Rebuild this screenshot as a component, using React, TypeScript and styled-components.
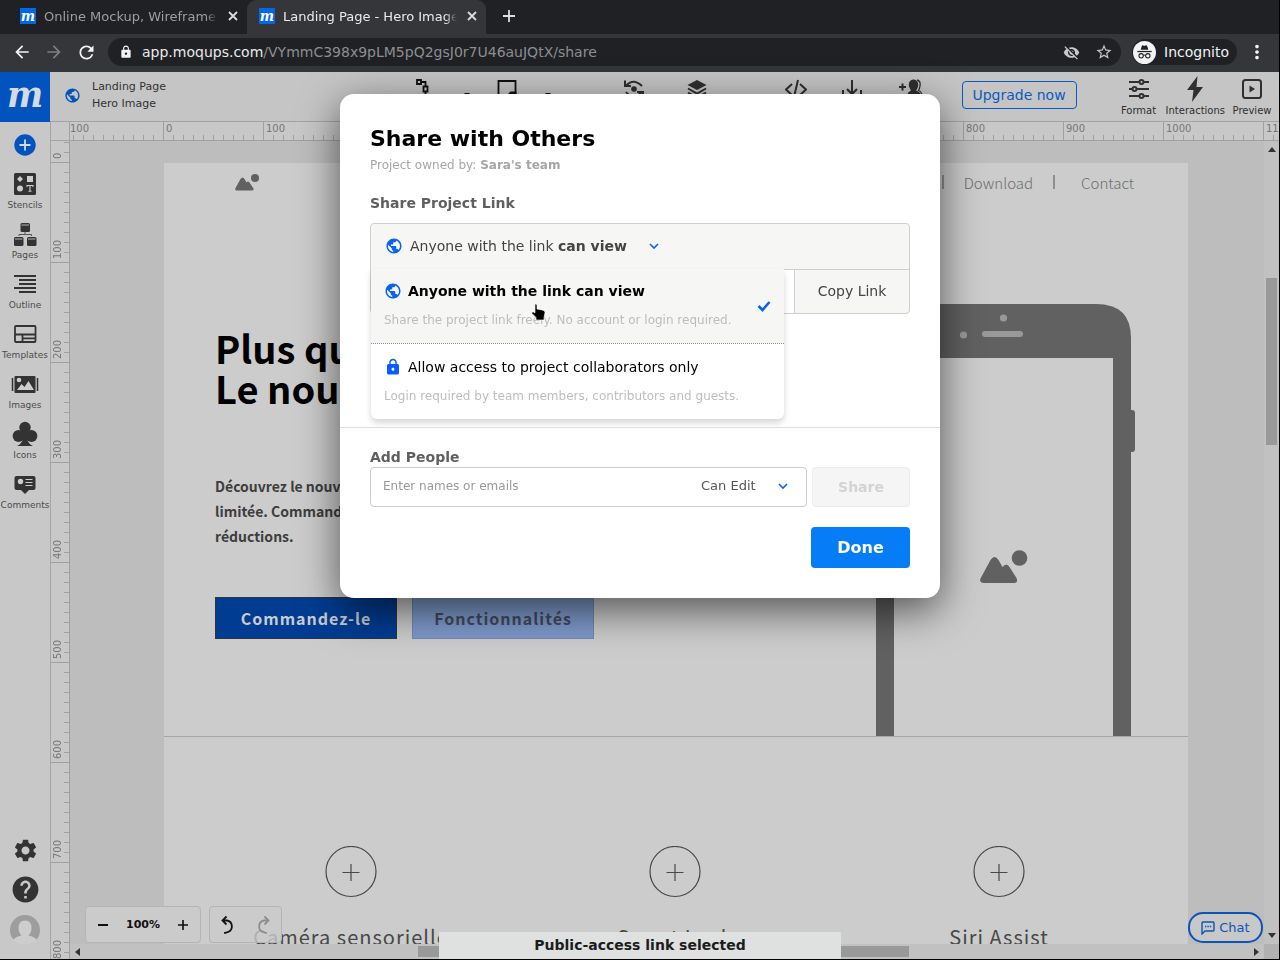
import React from "react";
import styled, { createGlobalStyle, css } from "styled-components";
import {
  MdPublic,
  MdSettings,
  MdHelp,
  MdLock,
  MdVisibilityOff,
  MdStarBorder,
  MdArrowBack,
  MdArrowForward,
  MdRefresh,
  MdMoreVert,
} from "react-icons/md";

const ui = `"DejaVu Sans", Verdana, sans-serif`;
const design = `"Noto Sans CJK SC", "Noto Sans", sans-serif`;
const brand = `"DejaVu Serif Condensed", "DejaVu Serif", serif`;

const GlobalStyle = createGlobalStyle`
  *, *::before, *::after { box-sizing: border-box; }
  body { margin: 0; font-family: ${ui}; background: #000; }
  button, input, select { font: inherit; color: inherit; margin: 0; }
  button { cursor: pointer; padding: 0; border: 0; background: none; }
  h1, h2, h3, p { margin: 0; }
  svg { display: block; flex: none; }
`;

const Window = styled.div`
  height: 100vh;
  display: flex;
  flex-direction: column;
  overflow: hidden;
  border-right: 1px solid #000;
  border-bottom: 1px solid #000;
  background: #c8c8c8;
`;

/* ---------- browser chrome ---------- */

const TabStrip = styled.div`
  display: flex;
  height: 34px;
  padding-left: 8px;
  background: #202124;
`;

const Tab = styled.div<{ $active?: boolean }>`
  display: flex;
  align-items: center;
  width: 239px;
  padding: 0 7px 2px 12px;
  gap: 8px;
  font-size: 13px;
  border-radius: 9px 9px 0 0;
  color: ${(p) => (p.$active ? "#e8eaed" : "#9b9ea2")};
  background: ${(p) => (p.$active ? "#35363a" : "transparent")};
`;

const Favicon = styled.span`
  display: grid;
  place-items: center;
  flex: none;
  width: 16px;
  height: 16px;
  background: #0666e8;
  color: #fff;
  font: italic bold 15px/14px ${brand};
`;

const TabTitle = styled.span`
  flex: 1;
  min-width: 0;
  overflow: hidden;
  white-space: nowrap;
  mask-image: linear-gradient(90deg, #000 93%, transparent);
`;

const TabButton = styled.button`
  display: grid;
  place-items: center;
  width: 14px;
  height: 32px;
  color: #dadce0;
`;

const NewTab = styled(TabButton)`
  margin: 0 16px;
`;

const AddressBar = styled.div`
  display: flex;
  align-items: center;
  height: 38px;
  padding: 0 11px 2px 12px;
  background: #35363a;
  color: #f1f3f4;
`;

const NavButtons = styled.div`
  display: flex;
  gap: 12px;
  width: 96px;
`;

const NavButton = styled.button<{ $dim?: boolean }>`
  color: ${(p) => (p.$dim ? "#7d7e81" : "#f1f3f4")};
`;

const Omnibox = styled.div`
  display: flex;
  flex: 1;
  align-items: center;
  height: 28px;
  padding: 0 8px 0 11px;
  gap: 9px;
  border-radius: 14px;
  background: #202124;
  font-size: 14px;
`;

const Url = styled.span`
  flex: 1;
  color: #8c8e91;
  strong { font-weight: 400; color: #e8eaed; }
`;

const OmniButton = styled.button`
  margin-left: 6px;
  color: #c6c8cb;
`;

const Incognito = styled.div`
  display: flex;
  align-items: center;
  gap: 8px;
  height: 26px;
  margin: 0 9px 0 11px;
  padding: 0 8px 0 1px;
  border-radius: 13px;
  background: #202124;
  font-size: 14px;
`;

/* ---------- application frame ---------- */

const AppHeader = styled.header`
  display: flex;
  align-items: center;
  flex: none;
  height: 50px;
  background: #c5c5c6;
  border-bottom: 1px solid #a3a3a3;
`;

const Logo = styled.a`
  display: grid;
  place-items: center;
  align-self: flex-start;
  flex: none;
  width: 50px;
  height: 50px;
  background: #0253bd;
  color: #d5dbe4;
  font: italic bold 38px/42px ${brand};
  text-decoration: none;
  padding-bottom: 6px;
`;

const Project = styled.div`
  display: flex;
  align-items: center;
  gap: 11px;
  width: 150px;
  padding: 0 0 3px 14px;
  color: #333;
  font-size: 11px;
  line-height: 17px;
  white-space: nowrap;
  > svg { color: #0253bd; }
`;

const Tools = styled.div`
  display: flex;
  flex: 1;
  justify-content: center;
  align-items: flex-start;
  align-self: stretch;
  padding: 6px 0 0 212px;
  color: #2f2f2f;
`;

const Tool = styled.button<{ $gap: number }>`
  margin-right: ${(p) => p.$gap}px;
`;

const Upgrade = styled.button`
  height: 28px;
  width: 115px;
  border: 1px solid #0a5cc0;
  border-radius: 4px;
  color: #0a5cc0;
  font-size: 14px;
  margin: 0 40px 3px 37px;
`;

const PanelTools = styled.div`
  display: flex;
  gap: 5px;
  padding-right: 5px;
`;

const PanelTool = styled.button`
  display: flex;
  flex-direction: column;
  align-items: center;
  min-width: 44px;
  gap: 2px;
  font-size: 10px;
  line-height: 14px;
  color: #303030;
`;

const Body = styled.div`
  display: flex;
  flex: 1;
  min-height: 0;
`;

const Sidebar = styled.nav`
  display: flex;
  flex-direction: column;
  align-items: center;
  flex: none;
  width: 51px;
  padding-top: 12px;
  background: #c8c8c8;
  border-right: 1px solid #a6a6a6;
  color: #333;
`;

const SideItem = styled.button`
  display: flex;
  flex-direction: column;
  align-items: center;
  justify-content: flex-end;
  height: 50px;
  gap: 1px;
  font-size: 9px;
  line-height: 14px;
  color: #333;
  span { color: #4c4c4c; }
`;

const AddButton = styled.button`
  height: 22px;
  margin-bottom: 6px;
`;

const SideFooter = styled.div`
  display: flex;
  flex-direction: column;
  align-items: center;
  gap: 10px;
  margin-top: auto;
  padding-bottom: 14px;
`;

const Workspace = styled.main`
  display: grid;
  flex: 1;
  min-width: 0;
  grid-template-columns: 19px minmax(0, 1fr);
  grid-template-rows: 19px minmax(0, 1fr);
`;

const ruler = css`
  display: flex;
  overflow: hidden;
  color: #777;
  background-color: #c8c8c8;
  font-size: 10px;
  line-height: 12px;
`;

const Corner = styled.div`
  border-right: 1px solid #a3a3a3;
  border-bottom: 1px solid #a3a3a3;
`;

const TopRuler = styled.div`
  ${ruler}
  border-bottom: 1px solid #a0a0a0;
  background-image: linear-gradient(90deg, #a0a0a0 1px, transparent 1px),
    linear-gradient(90deg, #a0a0a0 1px, transparent 1px);
  background-size: 100px 100%, 10px 5px;
  background-repeat: repeat-x;
  background-position: 93px 0, 3px 100%;
  span { flex: none; width: 100px; padding: 1px 0 0 3px; }
  span:first-child { width: 93px; padding-left: 0; }
`;

const LeftRuler = styled.div`
  ${ruler}
  flex-direction: column;
  border-right: 1px solid #a0a0a0;
  background-image: linear-gradient(#a0a0a0 1px, transparent 1px),
    linear-gradient(#a0a0a0 1px, transparent 1px);
  background-size: 100% 100px, 5px 10px;
  background-repeat: repeat-y;
  background-position: 0 21px, 100% 1px;
  span {
    flex: none;
    height: 100px;
    padding-top: 3px;
    writing-mode: vertical-rl;
    transform: rotate(180deg);
    width: 18px;
    line-height: 12px;
    padding-right: 1px;
  }
  span:first-child { height: 21px; }
`;

const Viewport = styled.section`
  position: relative;
  display: grid;
  grid-template-columns: minmax(0, 1fr) 15px;
  grid-template-rows: minmax(0, 1fr) 15px;
  background: #bdbdbd;
`;

const Stage = styled.div`
  overflow: hidden;
  padding: 22px 0 0 94px;
`;

const Scroll = styled.div<{ $vertical?: boolean }>`
  display: flex;
  flex-direction: ${(p) => (p.$vertical ? "column" : "row")};
  align-items: center;
  justify-content: space-between;
  padding: ${(p) => (p.$vertical ? "5px 0" : "0 4px")};
  background: #c1c1c1;
`;

const Track = styled.div<{ $vertical?: boolean }>`
  display: grid;
  flex: 1;
  align-self: stretch;
  ${(p) =>
    p.$vertical
      ? css`grid-template-rows: 124fr 166fr 484fr; padding: 0 2px;`
      : css`grid-template-columns: 335fr 490fr 342fr; padding: 2px 0;`}
`;

const Thumb = styled.div<{ $vertical?: boolean }>`
  background: #999;
  ${(p) => (p.$vertical ? "grid-row: 2;" : "grid-column: 2;")}
`;

const ScrollCorner = styled.div`
  background: #b1b1b1;
`;

/* ---------- artboard ---------- */

const Artboard = styled.article`
  width: 1024px;
  height: 1400px;
  background: #ccc;
  font-family: ${design};
`;

const SiteNav = styled.div`
  display: flex;
  align-items: center;
  justify-content: space-between;
  height: 40px;
  padding: 0 54px 2px 71px;
`;

const SiteLinks = styled.div`
  display: flex;
  align-items: center;
  font-size: 15px;
  font-weight: 300;
  color: #6e6e6e;
  a { color: inherit; text-decoration: none; }
`;

const Separator = styled.span<{ $left?: number; $right: number }>`
  width: 2px;
  height: 14px;
  background: #8f8f8f;
  margin-left: ${(p) => p.$left || 0}px;
  margin-right: ${(p) => p.$right}px;
`;

const Hero = styled.section`
  display: flex;
  justify-content: space-between;
  align-items: flex-end;
  height: 534px;
  padding: 0 52px 0 51px;
  border-bottom: 1px solid #a6a6a6;
`;

const Pitch = styled.div`
  align-self: flex-start;
  padding-top: 125px;
`;

const Headline = styled.h1`
  font-size: 38px;
  font-weight: 700;
  line-height: 40px;
  color: #000;
`;

const Copy = styled.p`
  margin-top: 66px;
  font-size: 14px;
  font-weight: 700;
  line-height: 25px;
  color: #3d3d3d;
`;

const Line = styled.span`
  display: block;
`;

const CtaRow = styled.div`
  display: flex;
  gap: 15px;
  margin-top: 48px;
`;

const Cta = styled.button<{ $light?: boolean }>`
  height: 42px;
  width: 182px;
  border: 1px solid ${(p) => (p.$light ? "#7088b4" : "#2c3540")};
  background: ${(p) => (p.$light ? "#7e9acb" : "#003c92")};
  color: ${(p) => (p.$light ? "#424a5a" : "#c9ccd2")};
  font-size: 16px;
  font-weight: 700;
  letter-spacing: 1px;
`;

const Features = styled.section`
  display: grid;
  grid-template-columns: repeat(3, 1fr);
  padding: 109px 27px 0 25px;
`;

const Feature = styled.div`
  display: flex;
  flex-direction: column;
  align-items: center;
  gap: 24px;
  font-size: 20px;
  line-height: 30px;
  letter-spacing: 1px;
  color: #484848;
  h3 { font: inherit; }
`;

/* ---------- floating canvas controls ---------- */

const CanvasControls = styled.div`
  position: absolute;
  left: 15px;
  bottom: 16px;
  display: flex;
  gap: 8px;
`;

const ControlGroup = styled.div`
  display: flex;
  align-items: center;
  justify-content: space-between;
  gap: 18px;
  height: 37px;
  padding: 0 12px;
  border: 1px solid #b4b4b4;
  border-radius: 4px;
  background: #cbcbcb;
  font-size: 11px;
  font-weight: 700;
  color: #111;
`;

const UndoGroup = styled(ControlGroup)`
  padding: 0 8px;
  gap: 15px;
  background: rgba(203, 203, 203, 0.8);
`;

const Chat = styled.button`
  position: absolute;
  right: 16px;
  bottom: 16px;
  display: flex;
  align-items: center;
  justify-content: center;
  gap: 4px;
  width: 75px;
  height: 31px;
  border: 2px solid #0a55b5;
  border-radius: 15px;
  background: #c8c8c8;
  color: #0a55b5;
  font-size: 13px;
`;

/* ---------- share dialog ---------- */

const Overlay = styled.div`
  position: fixed;
  inset: 72px 0 0;
  padding-top: 22px;
`;

const Dialog = styled.div`
  position: relative;
  max-width: 600px;
  margin: 0 auto;
  border-radius: 14px;
  background: #fff;
  box-shadow: 0 12px 42px rgba(0, 0, 0, 0.6);
`;

const LinkSection = styled.section`
  padding: 31px 30px 113px;
  border-bottom: 1px solid #e0e0e0;
`;

const PeopleSection = styled.section`
  padding: 20px 30px 30px;
`;

const DialogTitle = styled.h2`
  font-size: 22px;
  line-height: 28px;
  color: #000;
`;

const Owner = styled.p`
  margin-top: 4px;
  font-size: 12px;
  line-height: 16px;
  color: #a6a6a6;
`;

const SectionLabel = styled.label`
  display: block;
  font-size: 14px;
  font-weight: 700;
  line-height: 18px;
  color: #5f5f5f;
`;

const LinkLabel = styled(SectionLabel)`
  margin-top: 21px;
`;

const LinkBox = styled.div`
  position: relative;
  margin-top: 11px;
  border: 1px solid #cfcfcf;
  border-radius: 4px;
  background: #f6f6f4;
`;

const AccessButton = styled.button`
  display: flex;
  align-items: center;
  width: 100%;
  height: 45px;
  padding: 0 0 2px 14px;
  gap: 7px;
  font-size: 14px;
  color: #444;
  > svg:last-child { margin-left: 14px; }
`;

const LinkRow = styled.div`
  display: flex;
  height: 44px;
  border-top: 1px solid #cfcfcf;
`;

const LinkInput = styled.input`
  flex: 1;
  min-width: 0;
  border: 0;
  background: #fff;
`;

const CopyButton = styled.button`
  width: 115px;
  padding-bottom: 2px;
  border-left: 1px solid #cfcfcf;
  font-size: 14px;
  color: #444;
`;

const Menu = styled.div`
  position: absolute;
  top: 45px;
  left: 0;
  width: 413px;
  border-radius: 0 0 6px 6px;
  background: #fff;
  box-shadow: 0 4px 6px rgba(0, 0, 0, 0.16);
`;

const Option = styled.button<{ $selected?: boolean }>`
  display: flex;
  align-items: center;
  justify-content: space-between;
  width: 100%;
  height: 75px;
  padding: 0 13px;
  text-align: left;
  border-radius: 0 0 6px 6px;
  color: #000;
  ${(p) =>
    p.$selected &&
    css`
      background: #f6f6f4;
      border-bottom: 1px dotted #8f8f8f;
      border-radius: 0;
      font-weight: 700;
    `}
`;

const OptionText = styled.span`
  padding-bottom: 3px;
`;

const OptionTitle = styled.span`
  display: flex;
  align-items: center;
  gap: 6px;
  font-size: 14px;
  line-height: 20px;
`;

const OptionHint = styled.span`
  display: block;
  margin-top: 11px;
  font-size: 12px;
  line-height: 16px;
  font-weight: 400;
  color: #bdbdbd;
`;

const Pointer = styled.svg`
  position: absolute;
  left: 159px;
  top: 34px;
`;

const PeopleRow = styled.div`
  display: flex;
  gap: 5px;
  margin-top: 1px;
`;

const PeopleField = styled.div`
  display: flex;
  align-items: center;
  flex: 1;
  height: 40px;
  padding: 0 17px 2px 12px;
  border: 1px solid #cbcbcb;
  border-radius: 4px;
`;

const PeopleInput = styled.input`
  flex: 1;
  min-width: 0;
  padding: 0;
  border: 0;
  outline: 0;
  font-size: 12px;
  background: none;
  &::placeholder { color: #999; opacity: 1; }
`;

const Role = styled.select`
  appearance: none;
  width: 76px;
  padding: 0 0 2px;
  border: 0;
  background: none;
  font-size: 13px;
  color: #555;
`;

const ShareButton = styled.button`
  width: 98px;
  border: 1px solid #ececec;
  border-radius: 4px;
  background: #f5f5f5;
  font-size: 14px;
  font-weight: 700;
  color: #d3d3d3;
`;

const DoneButton = styled.button`
  display: block;
  width: 99px;
  height: 41px;
  margin: 20px 0 0 auto;
  border-radius: 4px;
  background: #067df7;
  color: #fff;
  font-size: 16px;
  font-weight: 700;
`;

const Toast = styled.div`
  position: fixed;
  bottom: 1px;
  left: 50%;
  transform: translateX(-50%);
  width: 402px;
  height: 27px;
  background: #dfe1e0;
  color: #1c1c1c;
  text-align: center;
  font-size: 14px;
  font-weight: 700;
  line-height: 27px;
`;

/* ---------- drawings ---------- */

const Cross = ({ size = 10 }: { size?: number }) => (
  <svg width={size} height={size} viewBox="0 0 10 10" stroke="currentColor" strokeWidth="1.8">
    <path d="M1 1l8 8M9 1l-8 8" />
  </svg>
);

const Plus = ({ size, width = 2 }: { size: number; width?: number }) => (
  <svg width={size} height={size} viewBox="0 0 12 12" stroke="currentColor" strokeWidth={width}>
    <path d="M6 0v12M0 6h12" />
  </svg>
);

const Chevron = () => (
  <svg width="12" height="12" viewBox="0 0 12 12" fill="none" stroke="#0b62f0" strokeWidth="1.6">
    <path d="M2 4l4 4 4-4" />
  </svg>
);

const Picture = ({ width, color = "#616161" }: { width: number; color?: string }) => (
  <svg width={width} height={(width * 34) / 48} viewBox="0 0 48 34" fill={color}>
    <circle cx="40" cy="8" r="8" />
    <path d="M1 28L11 10q4-6 8 0l4 7q3-4 6 0l8 12q1 4-3 4H4q-5 0-3-5z" />
  </svg>
);

const IncognitoMark = () => (
  <svg width="23" height="23" viewBox="0 0 24 24">
    <circle cx="12" cy="12" r="12" fill="#f1f3f4" />
    <path d="M8 9l1.300-4q.5-.8 1.500-.3 1.200.5 2.400 0 1-.5 1.500.3L16 9z" fill="#202124" />
    <path d="M4.500 11h15" stroke="#202124" strokeWidth="1.300" />
    <g fill="none" stroke="#202124" strokeWidth="1.100">
      <circle cx="8.500" cy="15.500" r="2.300" />
      <circle cx="15.500" cy="15.500" r="2.300" />
      <path d="M10.800 15q1.200-.8 2.400 0" />
    </g>
  </svg>
);

const ConnectorIcon = () => (
  <svg width="22" height="24" viewBox="0 0 22 24" fill="none" stroke="#111" strokeWidth="1.800">
    <path d="M4 2h4v4H4zM8 4h4.500v4.500M10.500 8.500h4v5h-4zM12.500 13.500v5h3" />
  </svg>
);

const DashIcon = () => (
  <svg width="8" height="24" viewBox="0 0 8 24" fill="#111">
    <path d="M1 15h6l-3 3z" />
  </svg>
);

const FrameIcon = () => (
  <svg width="22" height="24" viewBox="0 0 22 24">
    <path d="M2.500 20V3h17v14" fill="none" stroke="#111" strokeWidth="1.800" />
    <path d="M12.500 24v-8.500l2-2h6V24z" fill="#111" />
  </svg>
);

const SnapshotIcon = () => (
  <svg width="22" height="24" viewBox="0 0 22 24" fill="none" stroke="currentColor" strokeWidth="2">
    <circle cx="11" cy="11" r="2.800" fill="currentColor" stroke="none" />
    <path d="M3 8q7-8.500 16 0M2 2.500V8h6M3 14q7 9 16 0M20 20v-6h-6" />
  </svg>
);

const LayersIcon = () => (
  <svg width="22" height="24" viewBox="0 0 22 24" fill="none" stroke="currentColor" strokeWidth="2">
    <path d="M11 2l9.500 5-9.500 5-9.500-5z" fill="currentColor" stroke="none" />
    <path d="M2 10.500l9 5 9-5M2 14.500l9 5 9-5" />
  </svg>
);

const CodeIcon = () => (
  <svg width="22" height="24" viewBox="0 0 22 24" fill="none" stroke="currentColor" strokeWidth="2">
    <path d="M7 6l-6 5.500 6 5.500M15 6l6 5.500-6 5.500M13 2L9 19" />
  </svg>
);

const ExportIcon = () => (
  <svg width="22" height="24" viewBox="0 0 22 24" fill="none" stroke="currentColor" strokeWidth="2">
    <path d="M11 2v14M6 11l5 5 5-5M2 12v8h18v-8" />
  </svg>
);

const InviteIcon = () => (
  <svg width="24" height="24" viewBox="0 0 24 24">
    <path d="M0 9h7M3.500 5.500v7" stroke="currentColor" strokeWidth="2" />
    <path d="M8 17q1-3.500 4-4.500Q9 8 10 5q1-3.500 4.500-3.500T19 5q1 3.500-2 7.500 4 1 5 4.500v4H8z" fill="currentColor" />
    <path d="M18 2q4 1 3 6-.5 3-1.500 4.500 3 1 3.500 5" fill="none" stroke="currentColor" strokeWidth="1.300" />
  </svg>
);

const SlidersIcon = () => (
  <svg width="20" height="26" viewBox="0 0 20 26" fill="#c5c5c6" stroke="currentColor" strokeWidth="2">
    <path d="M0 6h20M0 13h20M0 20h20" />
    <circle cx="12.500" cy="6" r="2" />
    <circle cx="5.500" cy="13" r="2" />
    <circle cx="12.500" cy="20" r="2" />
  </svg>
);

const BoltIcon = () => (
  <svg width="18" height="26" viewBox="0 0 18 26" fill="currentColor">
    <path d="M11.500 0L1 14h6.500L6 26l11-15h-6.500z" />
  </svg>
);

const PlayIcon = () => (
  <svg width="20" height="26" viewBox="0 0 20 26" fill="none" stroke="currentColor" strokeWidth="2">
    <rect x="1" y="4" width="18" height="18" rx="2.500" />
    <path d="M7.500 9.500v7l5.500-3.500z" fill="currentColor" stroke="none" />
  </svg>
);

const AddIcon = () => (
  <svg width="22" height="22" viewBox="0 0 22 22">
    <circle cx="11" cy="11" r="10.700" fill="#0253bd" />
    <path d="M11 5.500v11M5.500 11h11" stroke="#d5dbe4" strokeWidth="1.800" />
  </svg>
);

const StencilsIcon = () => (
  <svg width="26" height="26" viewBox="0 0 26 26">
    <rect x="2" y="2" width="22" height="22" rx="1.500" fill="#333" />
    <path d="M8 5l3 3-3 3-3-3zM15 5h6v6h-6z" fill="#cdcdcd" />
    <circle cx="8" cy="17.500" r="3" fill="#cdcdcd" />
    <path d="M15 16v-1.500h6V16M18 14.500V20M16.500 20.300h3" fill="none" stroke="#cdcdcd" strokeWidth="1.100" />
  </svg>
);

const PagesIcon = () => (
  <svg width="26" height="26" viewBox="0 0 26 26" fill="#333">
    <rect x="8.500" y="2" width="9.500" height="9" rx="1.500" />
    <rect x="2" y="16" width="9.500" height="9" rx="1.500" />
    <rect x="15" y="16" width="9.500" height="9" rx="1.500" />
    <path d="M13 11v2.500M7 15v-1.500h12.500V15" fill="none" stroke="#555" strokeWidth="1" />
    <path d="M9.500 4h7.500M3 18h7.500M16 18h7.500" stroke="#b5b5b5" strokeWidth="1" />
  </svg>
);

const OutlineIcon = () => (
  <svg width="26" height="26" viewBox="0 0 26 26" stroke="#333" strokeWidth="1.800">
    <path d="M2 5h22M7 9h17M7 13h17M2 17h22M7 21h17" />
  </svg>
);

const TemplatesIcon = () => (
  <svg width="26" height="26" viewBox="0 0 26 26" fill="none" stroke="#333" strokeWidth="1.800">
    <rect x="3" y="5" width="20.500" height="16" rx="1" />
    <path d="M3 13.500h20M10.500 13.500V21M10.500 17.300H23" />
  </svg>
);

const ImagesIcon = () => (
  <svg width="28" height="26" viewBox="0 0 28 26" fill="#333">
    <rect x="3.500" y="5" width="21" height="17" rx="1" />
    <path d="M1.500 7v13M26.500 7v13" stroke="#333" strokeWidth="1.500" />
    <circle cx="8" cy="9" r="2.300" fill="#cdcdcd" />
    <path d="M6 19l4.500-6 3 3 4-6L23 19z" fill="#cdcdcd" />
  </svg>
);

const ClubIcon = () => (
  <svg width="26" height="26" viewBox="0 0 26 26" fill="#333">
    <circle cx="13" cy="6.500" r="5.700" />
    <circle cx="6.500" cy="15" r="5.900" />
    <circle cx="19.500" cy="15" r="5.900" />
    <path d="M10.500 9h5l-.5 8q1 6 6 8H5q5-2 6-8z" />
  </svg>
);

const CommentsIcon = () => (
  <svg width="26" height="26" viewBox="0 0 26 26">
    <path d="M4.500 5h17q2 0 2 2v10q0 2-2 2H17l-4 4-4-4H4.500q-2 0-2-2V7q0-2 2-2z" fill="#333" />
    <circle cx="8.500" cy="10.500" r="2.700" fill="#cdcdcd" />
    <path d="M13.500 8.500h7M13.500 11.500h7M13.500 14.500h7" stroke="#cdcdcd" strokeWidth="1.200" />
  </svg>
);

const Avatar = () => (
  <svg width="30" height="30" viewBox="0 0 30 30">
    <circle cx="15" cy="15" r="15" fill="#9d9d9d" />
    <path d="M15 5.500q6.500 0 6.500 7.500 0 5-3 7.500 6 1 8.500 4.500-5 5-12 5T3 25q2.500-3.500 8.500-4.500-3-2.500-3-7.500 0-7.500 6.500-7.500z" fill="#cdcdcd" />
  </svg>
);

const UndoIcon = ({ redo }: { redo?: boolean }) => (
  <svg
    width="20"
    height="22"
    viewBox="0 0 20 22"
    fill="none"
    stroke={redo ? "#8e8e8e" : "#111"}
    strokeWidth="1.800"
  >
    <path
      d={
        redo
          ? "M15 6.500h-4a6 6 0 0 0-1 11.500q2 1 4 .8M11.500 2.500l4 4-4 4"
          : "M5 6.500h4a6 6 0 0 1 1 11.500q-2 1-4 .8M8.500 2.500l-4 4 4 4"
      }
    />
  </svg>
);

const ChatIcon = () => (
  <svg width="14" height="14" viewBox="0 0 14 14" fill="none" stroke="currentColor" strokeWidth="1.400">
    <path d="M1 13V2q0-1 1-1h10q1 0 1 1v7q0 1-1 1H4z" />
    <path d="M4 5.500h1.400M6.400 5.500h1.400M8.800 5.500h1.400" />
  </svg>
);

const Check = () => (
  <svg width="14" height="12" viewBox="0 0 14 12" fill="none" stroke="#0b62f0" strokeWidth="2.600">
    <path d="M1.500 6l4 4L12.500 2" />
  </svg>
);

const Arrow = ({ d }: { d: string }) => (
  <svg width="8" height="8" viewBox="0 0 8 8" fill="#333">
    <path d={d} />
  </svg>
);

const PlusCircle = () => (
  <svg width="52" height="52" viewBox="0 0 52 52" fill="none" stroke="#484848" strokeWidth="1.200">
    <circle cx="26" cy="25.500" r="25" />
    <path d="M26 18v17M17.500 26.500h17" />
  </svg>
);

const Phone = () => (
  <svg width="260" height="433" viewBox="0 0 260 433">
    <rect x="250" y="107" width="9" height="42" rx="3" fill="#616161" />
    <path d="M0 433V35Q0 1 35 1h185q35 0 35 34v398z" fill="#616161" />
    <path d="M18 55h219v378H18z" fill="#ccc" />
    <g fill="#999">
      <circle cx="127.500" cy="15" r="3.600" />
      <circle cx="87.500" cy="32" r="3.600" />
      <rect x="106" y="28" width="41" height="6" rx="3" />
    </g>
    <g transform="translate(104 247)" fill="#616161">
      <circle cx="39.500" cy="8" r="7.800" />
      <path d="M.5 28.500L10.500 10q4-6 8 0l4 7q4-5 7 0l7 11q2 5-2.500 5H4q-5 0-3.500-4.500z" />
    </g>
  </svg>
);

/* ---------- data ---------- */

const sideItems: [string, React.FC][] = [
  ["Stencils", StencilsIcon],
  ["Pages", PagesIcon],
  ["Outline", OutlineIcon],
  ["Templates", TemplatesIcon],
  ["Images", ImagesIcon],
  ["Icons", ClubIcon],
  ["Comments", CommentsIcon],
];

const tools: [string, React.FC, number][] = [
  ["Connector", ConnectorIcon, 28],
  ["Connector options", DashIcon, 25],
  ["Frame", FrameIcon, 26],
  ["Frame options", DashIcon, 71],
  ["Snapshot", SnapshotIcon, 41],
  ["Layers", LayersIcon, 77],
  ["Code", CodeIcon, 34],
  ["Export", ExportIcon, 36],
  ["Invite", InviteIcon, 0],
];

const topMarks = ["100", "0", "100", "200", "300", "400", "500", "600", "700", "800", "900", "1000", "1100"];
const leftMarks = ["0", "100", "200", "300", "400", "500", "600", "700", "800"];

export default function App() {
  return (
    <>
      <GlobalStyle />
      <Window>
        <TabStrip>
          <Tab>
            <Favicon>m</Favicon>
            <TabTitle>Online Mockup, Wireframe</TabTitle>
            <TabButton aria-label="Close tab"><Cross /></TabButton>
          </Tab>
          <Tab $active>
            <Favicon>m</Favicon>
            <TabTitle>Landing Page - Hero Image</TabTitle>
            <TabButton aria-label="Close tab"><Cross /></TabButton>
          </Tab>
          <NewTab aria-label="New tab"><Plus size={12} width={1.8} /></NewTab>
        </TabStrip>
        <AddressBar>
          <NavButtons>
            <NavButton aria-label="Back"><MdArrowBack size={20} /></NavButton>
            <NavButton aria-label="Forward" $dim><MdArrowForward size={20} /></NavButton>
            <NavButton aria-label="Reload"><MdRefresh size={21} /></NavButton>
          </NavButtons>
          <Omnibox>
            <MdLock size={14} />
            <Url><strong>app.moqups.com</strong>/VYmmC398x9pLM5pQ2gsJ0r7U46auJQtX/share</Url>
            <OmniButton aria-label="Cookies blocked"><MdVisibilityOff size={17} /></OmniButton>
            <OmniButton aria-label="Bookmark"><MdStarBorder size={18} /></OmniButton>
          </Omnibox>
          <Incognito><IncognitoMark />Incognito</Incognito>
          <NavButton aria-label="Menu"><MdMoreVert size={22} /></NavButton>
        </AddressBar>

        <AppHeader>
          <Logo href="#" aria-label="Home">m</Logo>
          <Project>
            <MdPublic size={17} />
            <div>Landing Page<br />Hero Image</div>
          </Project>
          <Tools>
            {tools.map(([name, Icon, gap]) => (
              <Tool key={name} aria-label={name} $gap={gap}><Icon /></Tool>
            ))}
          </Tools>
          <Upgrade>Upgrade now</Upgrade>
          <PanelTools>
            <PanelTool><SlidersIcon />Format</PanelTool>
            <PanelTool><BoltIcon />Interactions</PanelTool>
            <PanelTool><PlayIcon />Preview</PanelTool>
          </PanelTools>
        </AppHeader>

        <Body>
          <Sidebar>
            <AddButton aria-label="Add"><AddIcon /></AddButton>
            {sideItems.map(([name, Icon]) => (
              <SideItem key={name}><Icon /><span>{name}</span></SideItem>
            ))}
            <SideFooter>
              <button aria-label="Settings"><MdSettings size={27} /></button>
              <button aria-label="Help"><MdHelp size={31} /></button>
              <button aria-label="Account"><Avatar /></button>
            </SideFooter>
          </Sidebar>

          <Workspace>
            <Corner />
            <TopRuler>{topMarks.map((m, i) => <span key={i}>{m}</span>)}</TopRuler>
            <LeftRuler>{leftMarks.map((m) => <span key={m}>{m}</span>)}</LeftRuler>
            <Viewport>
              <Stage>
                <Artboard>
                  <SiteNav>
                    <Picture width={24} />
                    <SiteLinks>
                      <Separator $right={20} />
                      <a href="#download">Download</a>
                      <Separator $left={20} $right={26} />
                      <a href="#contact">Contact</a>
                    </SiteLinks>
                  </SiteNav>
                  <Hero>
                    <Pitch>
                      <Headline><Line>Plus qu’un</Line><Line>Le nouveau</Line></Headline>
                      <Copy>
                        <Line>Découvrez le nouveau</Line>
                        <Line>limitée. Commandez</Line>
                        <Line>réductions.</Line>
                      </Copy>
                      <CtaRow>
                        <Cta>Commandez-le</Cta>
                        <Cta $light>Fonctionnalités</Cta>
                      </CtaRow>
                    </Pitch>
                    <Phone />
                  </Hero>
                  <Features>
                    {["Caméra sensorielle", "Smart Lock", "Siri Assist"].map((t) => (
                      <Feature key={t}><PlusCircle /><h3>{t}</h3></Feature>
                    ))}
                  </Features>
                </Artboard>
              </Stage>
              <Scroll $vertical>
                <Arrow d="M0 6h8L4 1z" />
                <Track $vertical><Thumb $vertical /></Track>
                <Arrow d="M0 2h8L4 7z" />
              </Scroll>
              <Scroll>
                <Arrow d="M6 0v8L1 4z" />
                <Track><Thumb /></Track>
                <Arrow d="M2 0v8l5-4z" />
              </Scroll>
              <ScrollCorner />
              <CanvasControls>
                <ControlGroup>
                  <button aria-label="Zoom out">
                    <svg width="10" height="10" viewBox="0 0 10 10"><path d="M0 5h10" stroke="#111" strokeWidth="2" /></svg>
                  </button>
                  100%
                  <button aria-label="Zoom in"><Plus size={10} /></button>
                </ControlGroup>
                <UndoGroup>
                  <button aria-label="Undo"><UndoIcon /></button>
                  <button aria-label="Redo"><UndoIcon redo /></button>
                </UndoGroup>
              </CanvasControls>
              <Chat><ChatIcon />Chat</Chat>
            </Viewport>
          </Workspace>
        </Body>
      </Window>

      <Overlay>
        <Dialog role="dialog" aria-labelledby="share-title">
          <LinkSection>
            <DialogTitle id="share-title">Share with Others</DialogTitle>
            <Owner>Project owned by: <b>Sara's team</b></Owner>
            <LinkLabel htmlFor="project-link">Share Project Link</LinkLabel>
            <LinkBox>
              <AccessButton aria-haspopup="listbox" aria-expanded="true">
                <MdPublic size={18} color="#0b62f0" />
                <span>Anyone with the link <b>can view</b></span>
                <Chevron />
              </AccessButton>
              <LinkRow>
                <LinkInput id="project-link" readOnly />
                <CopyButton>Copy Link</CopyButton>
              </LinkRow>
              <Menu role="listbox">
                <Option role="option" aria-selected="true" $selected>
                  <OptionText>
                    <OptionTitle><MdPublic size={18} color="#0b62f0" />Anyone with the link can view</OptionTitle>
                    <OptionHint>Share the project link freely. No account or login required.</OptionHint>
                  </OptionText>
                  <Check />
                </Option>
                <Option role="option" aria-selected="false">
                  <OptionText>
                    <OptionTitle><MdLock size={18} color="#0b5cff" />Allow access to project collaborators only</OptionTitle>
                    <OptionHint>Login required by team members, contributors and guests.</OptionHint>
                  </OptionText>
                </Option>
                <Pointer width="16" height="18" viewBox="0 0 16 18">
                  <path d="M5 1q2-.5 2 1.500V6l6 1.200q2 .6 2 2.300l-1 5V17H6v-2.500L2 10.500Q1 8.500 3.500 9L5 10z" fill="#000" stroke="#fff" strokeWidth=".6" />
                </Pointer>
              </Menu>
            </LinkBox>
          </LinkSection>
          <PeopleSection>
            <SectionLabel htmlFor="people">Add People</SectionLabel>
            <PeopleRow>
              <PeopleField>
                <PeopleInput id="people" placeholder="Enter names or emails" />
                <Role aria-label="Permission"><option>Can Edit</option></Role>
                <Chevron />
              </PeopleField>
              <ShareButton disabled>Share</ShareButton>
            </PeopleRow>
            <DoneButton>Done</DoneButton>
          </PeopleSection>
        </Dialog>
      </Overlay>
      <Toast role="status">Public-access link selected</Toast>
    </>
  );
}
